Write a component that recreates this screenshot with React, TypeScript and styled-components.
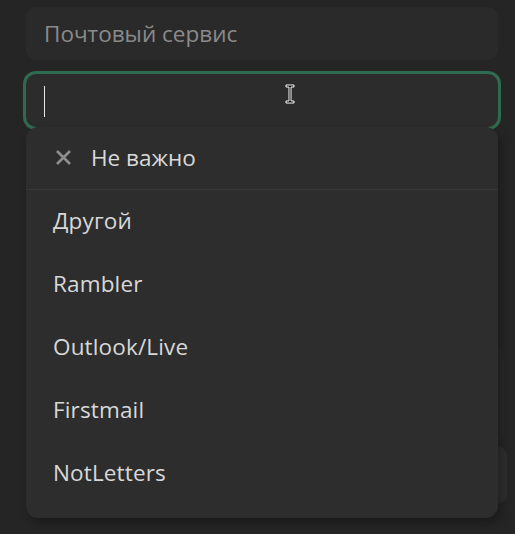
import styled, { createGlobalStyle } from "styled-components";

const GlobalStyle = createGlobalStyle`
  html, body {
    margin: 0;
    background: #252525;
    font-family: "Open Sans", "Noto Sans", sans-serif;
  }
`;

const Page = styled.div`
  width: 515px;
  height: 534px;
  overflow: hidden;
  box-sizing: border-box;
  padding: 7px 0 0 26px;
`;

const Form = styled.div`
  position: relative;
  width: 472px;
  display: flex;
  flex-direction: column;
  gap: 14px;
`;

const Field = styled.div<{ $focused?: boolean }>`
  position: relative;
  box-sizing: border-box;
  width: 472px;
  height: 53px;
  border-radius: 10px;
  background: ${(p) => (p.$focused ? "#2c2c2c" : "#2a2a2a")};
  box-shadow: ${(p) => (p.$focused ? "0 0 0 3px #2f6b50" : "none")};
  display: flex;
  align-items: center;
  padding-left: 18px;
`;

const Placeholder = styled.span`
  font-size: 22.5px;
  color: #8a8a8a;
  margin-top: -1px;
`;

const Caret = styled.span`
  width: 1px;
  height: 31px;
  background: #e6e6e6;
  margin-top: 2px;
`;

const Pointer = styled.svg`
  position: absolute;
  left: 259px;
  top: 10px;
`;

const Hidden = styled.div`
  margin-top: 205px;
  display: flex;
  flex-direction: column;
  gap: 2px;
`;

const Panel = styled.div<{ $h: number; $w: number; $bg: string }>`
  width: ${(p) => p.$w}px;
  height: ${(p) => p.$h}px;
  background: ${(p) => p.$bg};
  border-radius: 10px;
`;

const Dropdown = styled.div`
  position: absolute;
  top: 120px;
  left: 0;
  width: 472px;
  height: 391px;
  background: #2d2d2d;
  border-radius: 12px;
  box-shadow: 3px 5px 10px rgba(0, 0, 0, 0.3);
  display: flex;
  flex-direction: column;
  overflow: hidden;
`;

const ClearRow = styled.div`
  height: 61px;
  flex-shrink: 0;
  display: flex;
  align-items: center;
  gap: 19px;
  padding-left: 29px;
  padding-bottom: 1px;
  border-bottom: 1px solid #373737;
  font-size: 22.5px;
  color: #dadada;
`;

const Item = styled.div`
  height: 63px;
  flex-shrink: 0;
  display: flex;
  align-items: center;
  padding-left: 27px;
  padding-bottom: 3px;
  box-sizing: border-box;
  font-size: 22.5px;
  letter-spacing: 0.15px;
  color: #d8d8d8;
`;

const items = ["Другой", "Rambler", "Outlook/Live", "Firstmail", "NotLetters"];

export default function App() {
  return (
    <Page>
      <GlobalStyle />
      <Form>
        <Field>
          <Placeholder>Почтовый сервис</Placeholder>
        </Field>
        <Field $focused>
          <Caret />
          <Pointer width="10" height="20" viewBox="0 0 10 20">
            <path
              d="M1 1h8v2H6v14h3v2H1v-2h3V3H1z"
              fill="#000"
              stroke="#fff"
              strokeWidth="1"
            />
          </Pointer>
        </Field>
        <Hidden>
          <Panel $h={98} $w={478} $bg="#282828" />
          <Panel $h={58} $w={481} $bg="#2e2e2e" />
        </Hidden>
        <Dropdown>
          <ClearRow>
            <svg width="17" height="17" viewBox="0 0 17 17">
              <path
                d="M2 2L15 15M15 2L2 15"
                stroke="#8e8e8e"
                strokeWidth="2.6"
              />
            </svg>
            Не важно
          </ClearRow>
          {items.map((it) => (
            <Item key={it}>{it}</Item>
          ))}
        </Dropdown>
      </Form>
    </Page>
  );
}
